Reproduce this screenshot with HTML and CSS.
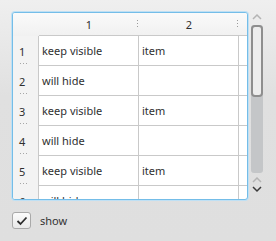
FILE: index.html
```html
<!DOCTYPE html>
<html lang="en">
<head>
  <meta charset="UTF-8">
  <title>Table view</title>
  <link rel="stylesheet" href="styles.css">
</head>
<body>
  <div class="top">
    <!-- таблиця -->
    <div class="view">
      <div class="grid">
        <div class="corner"></div>
        <div class="colhead dots">1</div>
        <div class="colhead dots">2</div>
        <div class="colhead"></div>

        <div class="rowhead">1</div>
        <div class="cell">keep visible</div>
        <div class="cell">item</div>
        <div class="cell filler"></div>

        <div class="rowhead">2</div>
        <div class="cell">will hide</div>
        <div class="cell"></div>
        <div class="cell filler"></div>

        <div class="rowhead">3</div>
        <div class="cell">keep visible</div>
        <div class="cell">item</div>
        <div class="cell filler"></div>

        <div class="rowhead">4</div>
        <div class="cell">will hide</div>
        <div class="cell"></div>
        <div class="cell filler"></div>

        <div class="rowhead">5</div>
        <div class="cell">keep visible</div>
        <div class="cell">item</div>
        <div class="cell filler"></div>

        <div class="rowhead">6</div>
        <div class="cell">will hide</div>
        <div class="cell"></div>
        <div class="cell filler"></div>
      </div>
    </div>

    <!-- скролбар -->
    <div class="scrollbar">
      <svg class="arrow" width="12" height="8" viewBox="0 0 12 8"><path d="M2 6 L6 2 L10 6" fill="none" stroke="#b4b4b4" stroke-width="1.5"/></svg>
      <div class="track"><div class="thumb"></div></div>
      <svg class="arrow" width="12" height="8" viewBox="0 0 12 8"><path d="M2 6 L6 2 L10 6" fill="none" stroke="#b4b4b4" stroke-width="1.5"/></svg>
      <svg class="arrow" width="12" height="8" viewBox="0 0 12 8"><path d="M2 2 L6 6 L10 2" fill="none" stroke="#3a3a3a" stroke-width="1.5"/></svg>
    </div>
  </div>

  <label class="check">
    <span class="box">
      <svg width="12" height="10" viewBox="0 0 12 10"><path d="M1.5 5 L4.5 8 L10.5 1.5" fill="none" stroke="#2e2e2e" stroke-width="1.8"/></svg>
    </span>
    <span class="check-text">show</span>
  </label>
</body>
</html>
```

FILE: styles.css
```css
body {
  margin: 0;
  width: 276px;
  height: 241px;
  background: linear-gradient(#efefef, #e0e0e0 40%, #dfdfdf);
  font-family: "Noto Sans", "DejaVu Sans", sans-serif;
  font-size: 11px;
  color: #2f2f2f;
  overflow: hidden;
}

.top {
  display: flex;
  padding: 12px 0 0 12px;
}

.view {
  width: 236px;
  height: 188px;
  box-sizing: border-box;
  border: 1px solid #74bde8;
  border-radius: 3px;
  box-shadow: 0 0 0 1px #bfe0f4;
  background: #fff;
  overflow: hidden;
}

.grid {
  display: grid;
  grid-template-columns: 26px 100px 100px 1fr;
  grid-template-rows: 23px repeat(6, 30px);
}

.corner,
.colhead {
  background: linear-gradient(#fafafa, #f1f1f1);
  border-bottom: 1px solid #c9c9c9;
  position: relative;
  display: flex;
  align-items: center;
  justify-content: center;
}
.corner {
  border-bottom: none;
}

/* вертикальні крапки між заголовками колонок */
.dots::after {
  content: "";
  position: absolute;
  right: 1px;
  top: 7px;
  width: 1px;
  height: 8px;
  background: repeating-linear-gradient(to bottom, #9c9c9c 0 1px, transparent 1px 3px);
}

.rowhead {
  background: #f3f3f3;
  border-right: 1px solid #c9c9c9;
  position: relative;
  display: flex;
  align-items: center;
  padding-left: 6px;
  padding-top: 1px;
}
/* горизонтальні крапки між рядками */
.rowhead::after {
  content: "";
  position: absolute;
  left: 7px;
  bottom: 2px;
  width: 8px;
  height: 1px;
  background: repeating-linear-gradient(to right, #a6a6a6 0 1px, transparent 1px 3px);
}

.cell {
  border-right: 1px solid #c9c9c9;
  border-bottom: 1px solid #c9c9c9;
  display: flex;
  align-items: center;
  padding-left: 3px;
}
.cell.filler {
  border-right: none;
}

.scrollbar {
  width: 12px;
  margin-left: 3px;
  display: flex;
  flex-direction: column;
  align-items: center;
}
.arrow {
  display: block;
  margin: 1px 0 0;
}
.track {
  width: 12px;
  height: 148px;
  margin: 4px 0 2px;
  background: #c4c6c8;
  border-radius: 3px;
  box-sizing: border-box;
}
.thumb {
  height: 72px;
  box-sizing: border-box;
  border: 2px solid #8e8e8e;
  border-radius: 4px;
  background: #ededed;
}

.check {
  display: flex;
  align-items: center;
  margin: 12px 0 0 12px;
}
.box {
  width: 19px;
  height: 17px;
  box-sizing: border-box;
  border: 1px solid #a9a9a9;
  border-radius: 3px;
  background: linear-gradient(#fbfbfb, #e9e9e9);
  display: flex;
  align-items: center;
  justify-content: center;
}
.check-text {
  margin-left: 9px;
  color: #333;
}
```
